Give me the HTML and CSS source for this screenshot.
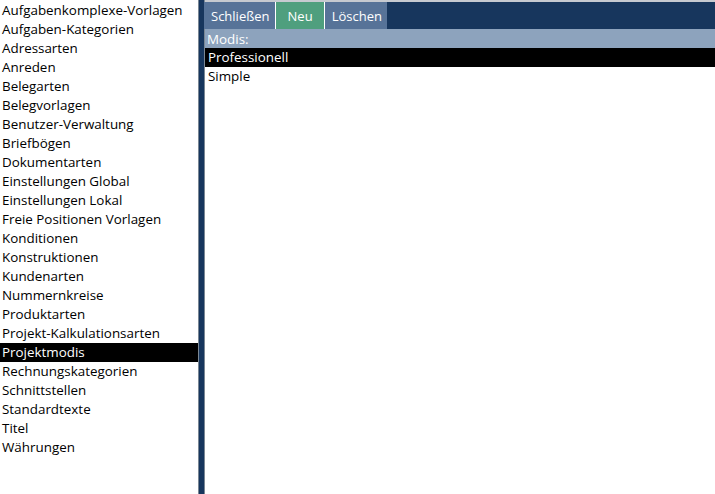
FILE: index.html
```html
<!DOCTYPE html>
<html lang="de">
<head>
    <meta charset="UTF-8">
    <title>Einstellungen</title>
    <link rel="stylesheet" href="styles.css">
</head>
<body>
    <div class="app">
        <ul class="nav-list">
            <li>Aufgabenkomplexe-Vorlagen</li>
            <li>Aufgaben-Kategorien</li>
            <li>Adressarten</li>
            <li>Anreden</li>
            <li>Belegarten</li>
            <li>Belegvorlagen</li>
            <li>Benutzer-Verwaltung</li>
            <li>Briefbögen</li>
            <li>Dokumentarten</li>
            <li>Einstellungen Global</li>
            <li>Einstellungen Lokal</li>
            <li>Freie Positionen Vorlagen</li>
            <li>Konditionen</li>
            <li>Konstruktionen</li>
            <li>Kundenarten</li>
            <li>Nummernkreise</li>
            <li>Produktarten</li>
            <li>Projekt-Kalkulationsarten</li>
            <li class="selected">Projektmodis</li>
            <li>Rechnungskategorien</li>
            <li>Schnittstellen</li>
            <li>Standardtexte</li>
            <li>Titel</li>
            <li>Währungen</li>
        </ul>

        <div class="splitter"></div>

        <div class="detail">
            <div class="toolbar">
                <button class="tb-btn">Schließen</button>
                <button class="tb-btn tb-new">Neu</button>
                <button class="tb-btn">Löschen</button>
            </div>
            <div class="band">Modis:</div>
            <ul class="mode-list">
                <li class="selected">Professionell</li>
                <li>Simple</li>
            </ul>
        </div>
    </div>
</body>
</html>
```

FILE: styles.css
```css
html, body {
    margin: 0;
    padding: 0;
    height: 100%;
    background: #ffffff;
}
body {
    font-family: "Open Sans", "Noto Sans", sans-serif;
    font-size: 13.4px;
    color: #000000;
}
.app {
    display: flex;
    height: 494px;
}
ul {
    list-style: none;
    margin: 0;
    padding: 0;
}
.nav-list {
    width: 198px;
    padding-top: 1px;
    flex-shrink: 0;
}
.nav-list li {
    height: 19px;
    line-height: 19px;
    padding-left: 2px;
    white-space: nowrap;
}
.selected {
    background: #000000;
    color: #ffffff;
}
.splitter {
    width: 5px;
    background: #17365d;
    border-left: 1px solid #7a8794;
    border-right: 1px solid #7a8794;
    flex-shrink: 0;
}
.detail {
    flex: 1;
    display: flex;
    flex-direction: column;
    border-top: 2px solid #c6cad0;
}
.toolbar {
    display: flex;
    height: 27px;
    background: #17365d;
    margin-left: -1px;
}
.tb-btn {
    font-family: inherit;
    font-size: 13px;
    color: #ffffff;
    background: #577398;
    border: none;
    margin: 0;
    padding: 0 5px 0 7px;
    height: 27px;
    border-right: 1px solid #ffffff;
}
.tb-btn:last-child {
    border-right: none;
}
.tb-new {
    background: #4f9f7e;
    padding: 0 11px 0 12px;
}
.band {
    height: 18px;
    line-height: 18px;
    background: #8da3bd;
    color: #ffffff;
    padding-left: 2px;
    border-top: 1px solid #8da3bd;
}
.mode-list li {
    height: 19px;
    line-height: 19px;
    padding-left: 3px;
}
```
